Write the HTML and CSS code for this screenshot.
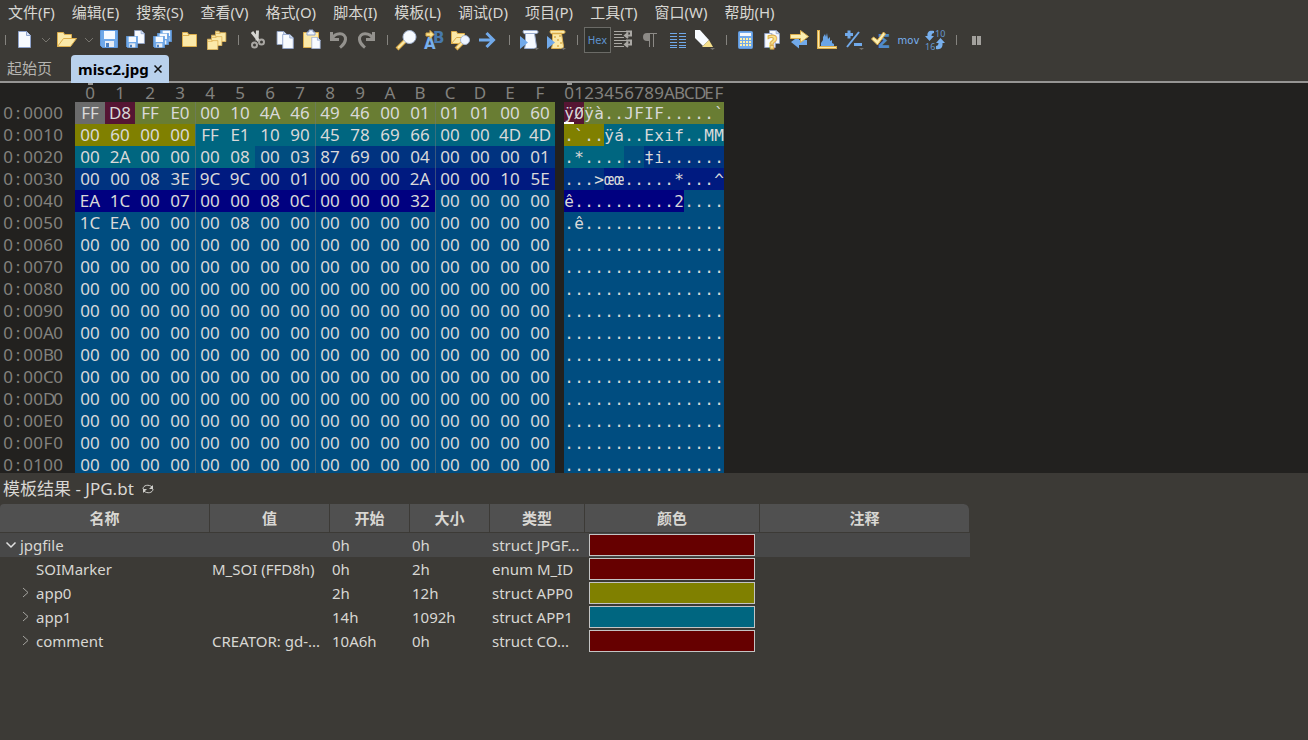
FILE: index.html
```html
<!DOCTYPE html>
<html lang="zh-CN">
<head>
<meta charset="utf-8">
<title>misc2.jpg</title>
<link rel="stylesheet" href="styles.css">
</head>
<body>
<svg class="defs" aria-hidden="true">
  <symbol id="page" viewBox="0 0 13 17"><path d="M.5.5h8l4 4v12H.5z" fill="#f8fbff" stroke="#8fa3cc"/><path d="M8.500.5v4h4" fill="#d5e2f5" stroke="#8fa3cc"/></symbol>
  <symbol id="floppy" viewBox="0 0 18 18"><path d="M.5.5h17v17H2.500l-2-2z" fill="#6fa8e8" stroke="#5f98dc"/><path d="M4 1h11v8H4z" fill="#f6faff"/><path d="M5 11h9v6H5z" fill="#e8edf3"/><path d="M6 13h3v4H6z" fill="#4a7fc0"/></symbol>
  <symbol id="folder" viewBox="0 0 16 16"><path d="M.5 15.500V1.500h5l1 2h8v12z" fill="#fbe9a9" stroke="#dcae4c"/><path d="M1 4.500h6l1-1" fill="none" stroke="#dcae4c"/></symbol>
</svg>

<nav class="menubar" aria-label="菜单">
  <button>文件(F)</button><button>编辑(E)</button><button>搜索(S)</button><button>查看(V)</button><button>格式(O)</button><button>脚本(I)</button><button>模板(L)</button><button>调试(D)</button><button>项目(P)</button><button>工具(T)</button><button>窗口(W)</button><button>帮助(H)</button>
</nav>

<div class="toolbar" role="toolbar">
  <span class="sep first"></span>
  <button aria-label="新建"><svg viewBox="0 0 21 22"><use href="#page" x="5" y="2" width="13" height="17"/></svg></button>
  <button class="drop" aria-label="新建选项"><svg viewBox="0 0 10 6"><path d="M1 1l4 4 4-4" fill="none" stroke="#77756f"/></svg></button>
  <button aria-label="打开"><svg viewBox="0 0 21 22"><path d="M1.500 17.500v-14h6l1 2h7v4" fill="#fbe9a9" stroke="#dcae4c"/><path d="M1.500 17.500l6-8H20.500l-6 8z" fill="#fbe9a9" stroke="#dcae4c"/></svg></button>
  <button class="drop" aria-label="打开选项"><svg viewBox="0 0 10 6"><path d="M1 1l4 4 4-4" fill="none" stroke="#77756f"/></svg></button>
  <button aria-label="保存"><svg viewBox="0 0 21 22"><use href="#floppy" x="1" y="1" width="18" height="18"/></svg></button>
  <button aria-label="另存为"><svg viewBox="0 0 21 22"><use href="#page" x="8" y="1" width="11" height="14"/><use href="#floppy" x="0" y="7" width="12" height="12"/></svg></button>
  <button aria-label="全部保存"><svg viewBox="0 0 21 22"><use href="#floppy" x="7" y="1" width="12" height="12"/><use href="#floppy" x="4" y="4" width="12" height="12"/><use href="#floppy" x="0" y="7" width="12" height="12"/></svg></button>
  <button aria-label="关闭"><svg viewBox="0 0 21 22"><use href="#folder" x="2" y="2" width="16" height="16"/></svg></button>
  <button aria-label="全部关闭"><svg viewBox="0 0 21 22"><use href="#folder" x="8" y="1" width="12" height="12"/><use href="#folder" x="4" y="5" width="12" height="12"/><use href="#folder" x="0" y="9" width="12" height="12"/></svg></button>
  <span class="sep"></span>
  <button aria-label="剪切"><svg viewBox="0 0 21 22"><g fill="none"><path d="M4 3l7 9M9.500 1.500l-.5 10" stroke-width="3" stroke="#d5d4d0"/><circle cx="6.500" cy="16" r="2.500" stroke-width="2" stroke="#a9a7a3"/><circle cx="13.500" cy="13" r="2.500" stroke-width="2" stroke="#a9a7a3"/></g></svg></button>
  <button aria-label="复制"><svg viewBox="0 0 21 22"><use href="#page" x="1" y="2" width="12" height="14"/><use href="#page" x="7" y="5" width="12" height="15"/></svg></button>
  <button aria-label="粘贴"><svg viewBox="0 0 21 22"><path d="M1.500 3.500h15v15h-15z" fill="#fbe9a9" stroke="#dcae4c"/><path d="M5 3h2V1h4v2h2v3H5z" fill="#eef4fc" stroke="#8fa3cc"/><use href="#page" x="9" y="8" width="10" height="12"/></svg></button>
  <button aria-label="撤销"><svg viewBox="0 0 21 22"><g fill="none" stroke="#94928e" stroke-width="3"><path d="M2.500 3v7.500H10"/><path d="M3 10C6 3 17 3 16.500 10.500 16 15 14 16 11 18.500"/></g></svg></button>
  <button aria-label="重做"><svg viewBox="0 0 21 22"><g fill="none" stroke="#94928e" stroke-width="3"><path d="M17.500 3v7.500H10"/><path d="M17 10C14 3 3 3 3.500 10.500 4 15 6 16 9 18.500"/></g></svg></button>
  <span class="sep"></span>
  <button aria-label="查找"><svg viewBox="0 0 21 22"><path d="M0 20l8-8" stroke="#dcae4c" stroke-width="4"/><path d="M1 19l7-7" stroke="#fbe9a9" stroke-width="2"/><circle cx="12.500" cy="8" r="6.500" fill="#f6faff" stroke="#a7b8d5"/></svg></button>
  <button aria-label="替换"><svg viewBox="0 0 21 22"><text x="9" y="14" class="glyph" font-size="15" fill="#4779ad">B</text><text x="0" y="20" class="glyph" font-size="15" fill="#78b0ee">A</text><path d="M2 4h4V1.500l4 4-4 4V7H2z" fill="#fbe390" stroke="#dcae4c"/></svg></button>
  <button aria-label="在文件中查找"><svg viewBox="0 0 21 22"><path d="M.5 14.500v-12h5l1 2h7v4" fill="#fbe9a9" stroke="#dcae4c"/><path d="M.5 14.500l5-6h12l-4 6z" fill="#fbe9a9" stroke="#dcae4c"/><path d="M5 20l7-7" stroke="#dcae4c" stroke-width="4"/><path d="M6 19l6-6" stroke="#fbe9a9" stroke-width="2"/><circle cx="14" cy="11" r="4.500" fill="#eef5ff" stroke="#a7b8d5"/></svg></button>
  <button aria-label="转到"><svg viewBox="0 0 21 22"><path d="M1 11h13M8.500 4l7 7-7 7" fill="none" stroke="#71a9ea" stroke-width="3"/></svg></button>
  <span class="sep"></span>
  <button aria-label="运行脚本"><svg viewBox="0 0 21 22"><path d="M4.500 1.500h13c2 0 2 3 0 3h-2l2 13c0 2-2 2-4 2h-8l1-4V5c-2 0-3-2-2-3.500z" fill="#f5f9ff" stroke="#9aacce"/><path d="M6 4.500h10" stroke="#9aacce"/><path d="M1 7l8 6.500L1 20z" fill="#71a9ea"/><path d="M15 19h5l-2.500 2z" fill="#75736f"/></svg></button>
  <button aria-label="运行模板"><svg viewBox="0 0 21 22"><path d="M4.500 1.500h13c2 0 2 3 0 3h-2l2 13c0 2-2 2-4 2h-8l1-4V5c-2 0-3-2-2-3.500z" fill="#fbe9a9" stroke="#dcae4c"/><path d="M6 4.500h10M8 8h2m3-1h2m-4 4h2m1 3h2m-5 3h2" stroke="#dcae4c" stroke-width="1.500"/><path d="M1 7l8 6.500L1 20z" fill="#71a9ea"/><path d="M15 19h5l-2.500 2z" fill="#75736f"/></svg></button>
  <span class="sep"></span>
  <button class="hex-btn" aria-pressed="true">Hex</button>
  <button aria-label="自动换行"><svg viewBox="0 0 21 22"><g fill="none" stroke="#aaa8a4"><path d="M0 2.500h16M0 5.500h8M0 8.500h10M0 11.500h16M0 14.500h8M0 17.500h10"/><path d="M12 2.500h5v4h-6M14 4l-3 2.500 3 2.500M12 11.500h5v4h-6M14 13l-3 2.500 3 2.500" stroke-width="2"/></g></svg></button>
  <button aria-label="显示空白"><svg viewBox="0 0 21 22"><path d="M9 4H6a4 4 0 0 0 0 8h3z" fill="#8c8a86"/><path d="M8.500 4v14M12.500 4v14M7 4.500h9" fill="none" stroke="#8c8a86"/></svg></button>
  <button aria-label="列模式"><svg viewBox="0 0 21 22"><path d="M2 4.500h7m2 0h7M2 7.500h7m2 0h7M2 10.500h7m2 0h7M2 13.500h7m2 0h7M2 16.500h7m2 0h7M2 18.500h7m2 0h7" stroke="#71a9ea"/></svg></button>
  <button aria-label="高亮"><svg viewBox="0 0 21 22"><path d="M0 1h5l9 10-6 6-8-8z" fill="#f8fbff"/><path d="M14 11l4 7H7z" fill="#f5df8c"/><path d="M15 19h5l-2.500 2z" fill="#75736f"/></svg></button>
  <span class="sep"></span>
  <button aria-label="计算器"><svg viewBox="0 0 21 22"><rect x="2.500" y="2.500" width="14" height="17" rx="1" fill="#71a9ea" stroke="#5f98dc"/><path d="M4 4h11v3H4z" fill="#f4f9ff"/><path d="M4 10h11M4 13h11M4 16h11" stroke="#fff0a8" stroke-width="2" stroke-dasharray="2 1"/></svg></button>
  <button aria-label="比较"><svg viewBox="0 0 21 22"><use href="#page" x="6" y="1" width="11" height="14"/><use href="#page" x="1" y="4" width="12" height="15"/><text x="4" y="20" class="glyph" font-size="19" fill="#fbe390" stroke="#dcae4c">?</text></svg></button>
  <button aria-label="转换"><svg viewBox="0 0 21 22"><path d="M17 11v5H9v3.500l-8-6.500 8-6v4z" fill="#71a9ea"/><path d="M.5 5.500h10v-4l8 6-8 6v-4H.5z" fill="#fbeeb0" stroke="#dcae4c"/></svg></button>
  <button aria-label="直方图"><svg viewBox="0 0 21 22"><path d="M4 17v-3l2-3V8l2-3 1 3 1-4 1 6 2-2v4l2-1v3l2 1v2z" fill="#6aa5e6"/><path d="M1.500 1v17.500H20" fill="none" stroke="#dcae4c" stroke-width="3"/><path d="M1.500 2v16.500H19" fill="none" stroke="#fbe9a9"/></svg></button>
  <button aria-label="校正"><svg viewBox="0 0 21 22"><path d="M1 5.500h8M5 1.500v8M10 15.500h8" stroke="#71a9ea" stroke-width="3"/><path d="M15 3L3 18" stroke="#71a9ea" stroke-width="2"/><path d="M15 19h5l-2.500 2z" fill="#75736f"/></svg></button>
  <button aria-label="校验和"><svg viewBox="0 0 21 22"><text x="6" y="19" class="glyph" font-size="20" fill="#4f89c9">Σ</text><path d="M.5 10l2-2 4 3 6-8 2 2-8 11z" fill="#fbeeb0" stroke="#dcae4c"/></svg></button>
  <button class="mov-btn">mov</button>
  <button aria-label="进制转换"><svg viewBox="0 0 21 22"><text x="10" y="8" class="digits">10</text><text x="0" y="21" class="digits">16</text><path d="M9 2C4 1 2 3 2.500 7H0l4.500 5L9 7H6.500c0-2 1-3 2.500-3zM11 20c5 1 7-2 6.500-6H20l-4.500-5L11 14h2.500c0 2-1 3-2.500 3z" fill="#78b0ee"/></svg></button>
  <span class="sep"></span>
  <button aria-label="暂停"><svg viewBox="0 0 21 22"><path d="M6 7h4v9H6zm5 0h4v9h-4z" fill="#a3a19d"/></svg></button>
</div>

<div class="tabs" role="tablist">
  <button class="tab" role="tab">起始页</button>
  <div class="tab active" role="tab" aria-selected="true">misc2.jpg<button aria-label="关闭标签"><svg viewBox="0 0 8 8"><path d="M.5.5l7 7M7.500.5l-7 7" stroke="#111" stroke-width="1.500"/></svg></button></div>
</div>

<main class="editor">
  <table class="hex">
    <thead><tr id="ruler"></tr></thead>
    <tbody id="bytes"></tbody>
  </table>
</main>

<section class="results">
  <h2>模板结果 - JPG.bt<button aria-label="刷新"><svg viewBox="0 0 12 10"><path d="M1 5c0-4 6-5 9-2M11 5c0 4-6 5-9 2" fill="none" stroke="#d0cfcb"/><path d="M11 1v4H7zM1 9V5h4z" fill="#d0cfcb"/></svg></button></h2>
  <table class="tree">
    <colgroup><col class="w-name"><col class="w-value"><col class="w-num"><col class="w-num"><col class="w-type"><col class="w-color"><col class="w-note"></colgroup>
    <thead><tr><th>名称</th><th>值</th><th>开始</th><th>大小</th><th>类型</th><th>颜色</th><th>注释</th></tr></thead>
    <tbody>
      <tr class="current"><td><div class="node"><svg class="arrow" viewBox="0 0 12 12"><path d="M1.500 3.500L6 8l4.500-4.500" fill="none" stroke="#e0e0e0" stroke-width="1.500"/></svg>jpgfile</div></td><td></td><td>0h</td><td>0h</td><td>struct JPGF...</td><td><div class="swatch red"></div></td><td></td></tr>
      <tr><td><div class="node child"><span class="arrow"></span>SOIMarker</div></td><td>M_SOI (FFD8h)</td><td>0h</td><td>2h</td><td>enum M_ID</td><td><div class="swatch red"></div></td><td></td></tr>
      <tr><td><div class="node child"><svg class="arrow" viewBox="0 0 12 12"><path d="M3 1l5 4.500L3 10" fill="none" stroke="#a5a4a0"/></svg>app0</div></td><td></td><td>2h</td><td>12h</td><td>struct APP0</td><td><div class="swatch olive"></div></td><td></td></tr>
      <tr><td><div class="node child"><svg class="arrow" viewBox="0 0 12 12"><path d="M3 1l5 4.500L3 10" fill="none" stroke="#a5a4a0"/></svg>app1</div></td><td></td><td>14h</td><td>1092h</td><td>struct APP1</td><td><div class="swatch teal"></div></td><td></td></tr>
      <tr><td><div class="node child"><svg class="arrow" viewBox="0 0 12 12"><path d="M3 1l5 4.500L3 10" fill="none" stroke="#a5a4a0"/></svg>comment</div></td><td>CREATOR: gd-...</td><td>10A6h</td><td>0h</td><td>struct CO...</td><td><div class="swatch red"></div></td><td></td></tr>
    </tbody>
  </table>
</section>
<script src="hex.js"></script>
</body>
</html>
```

FILE: styles.css
```css
* { box-sizing: border-box; }

body {
  margin: 0;
  height: 100vh;
  display: flex;
  flex-direction: column;
  overflow: hidden;
  background: #3c3a36;
  color: #d8d7d3;
  font: 15px/20px "Noto Sans", "Noto Sans CJK SC", sans-serif;
}

button {
  margin: 0;
  padding: 0;
  border: 0;
  background: none;
  color: inherit;
  font: inherit;
}

.defs { position: absolute; width: 0; height: 0; }

.menubar {
  display: flex;
  flex: none;
  gap: 17px;
  height: 26px;
  padding: 0 0 2px 8px;
  white-space: nowrap;
}

.toolbar { display: flex; flex: none; align-items: center; height: 28px; }
.toolbar button {
  flex: none;
  display: flex;
  align-items: center;
  justify-content: center;
  width: 27px;
  height: 26px;
}
.toolbar svg { width: 21px; height: 22px; overflow: visible; }
.toolbar .drop { width: 16px; padding-left: 2px; }
.toolbar .drop svg { flex: none; width: 10px; height: 6px; }
.sep { flex: none; width: 14px; height: 10px; background: linear-gradient(#85837f, #85837f) center / 1px 100% no-repeat; }
.sep.first { width: 10px; }
.glyph { font-family: "DejaVu Sans", sans-serif; font-weight: 700; }
.digits { font-family: "Noto Sans", sans-serif; font-size: 9px; fill: #6497cf; }
.toolbar .hex-btn {
  border: 1px solid #6b6b67;
  background: #30312d;
  color: #5e93cd;
  font: 10px "DejaVu Sans", sans-serif;
}
.toolbar .mov-btn { color: #78b0ee; font: 10px "DejaVu Sans", sans-serif; }

.tabs {
  display: flex;
  flex: none;
  align-items: stretch;
  height: 29px;
  padding-top: 1px;
  border-bottom: 2px solid #969593;
  color: #b5b4b0;
}
.tab { padding: 0 7px; }
.tabs > button.tab { width: 71px; text-align: left; }
.tab.active {
  display: flex;
  align-items: center;
  gap: 5px;
  height: 28px;
  border-radius: 4px 4px 0 0;
  background: #b9d1ec;
  color: #000;
  font-weight: 700;
}
.tab.active button { display: flex; }
.tab.active svg { width: 8px; height: 8px; }

.editor { flex: 1; min-height: 0; overflow: hidden; background: #22211f; }
.hex { border-collapse: collapse; font-size: 17px; line-height: 22px; color: #d9d9d9; }
.hex th { padding: 0; color: #82817e; font-weight: 400; }
.hex thead th { height: 19px; line-height: 19px; }
.hex td { padding: 0; }
.hex .addr { width: 75px; padding-left: 3px; }
.hex .byte { width: 30px; text-align: center; }
.hex tbody .byte.group { background-image: linear-gradient(#6f7a7a80, #6f7a7a80); background-size: 1px 100%; background-repeat: no-repeat; }
.hex .text { padding-left: 9px; }
.cells { display: flex; }
.cells > span { width: 10px; height: 22px; text-align: center; }
thead .cells > span { height: 19px; }
td .cells { font: 16px/23px "DejaVu Sans Mono", monospace; }
.mark { background: linear-gradient(#969593, #969593) top / 5px 2px no-repeat; }

.c-cursor { background-color: #6b6b6b; }
.c-soi { background-color: #551533; }
.c-line { background-color: #697d33; }
.c-app0 { background-color: #808000; }
.c-app1 { background-color: #006680; }
.c-steel { background-color: #004d80; }
.c-blue { background-color: #003380; }
.c-deep { background-color: #001a80; }
.c-navy { background-color: #000080; }
.caret { border-bottom: 2px solid #fff; }

.results { flex: none; height: 267px; }
.results h2 {
  display: flex;
  align-items: center;
  gap: 8px;
  margin: 0;
  padding: 1px 3px 0;
  height: 31px;
  font-size: 17px;
  line-height: 30px;
  font-weight: 400;
}
.results h2 button { display: flex; }
.results h2 svg { width: 12px; height: 10px; }

.tree { width: 970px; max-width: 100%; table-layout: fixed; border-collapse: separate; border-spacing: 0; }
.w-name { width: 210px; }
.w-value { width: 120px; }
.w-num { width: 80px; }
.w-type { width: 95px; }
.w-color { width: 175px; }
.w-note { width: 210px; }
.tree th {
  height: 29px;
  padding: 0;
  border-right: 1px solid #3c3a36;
  border-bottom: 1px solid #3c3a36;
  background: #505050;
  font-weight: 700;
}
.tree th:first-child { border-top-left-radius: 4px; }
.tree th:last-child { border-top-right-radius: 6px; }
.tree td { height: 24px; padding: 0 0 0 2px; overflow: hidden; text-overflow: ellipsis; white-space: nowrap; }
.tree .current td { background: #484848; }
.node { display: flex; align-items: center; gap: 3px; padding-left: 3px; }
.node.child { padding-left: 18px; gap: 4px; }
.arrow { flex: none; width: 12px; height: 12px; }
.swatch { height: 22px; margin: 0 5px 0 2px; border: 1px solid #c4c4c4; }
.red { background: #660000; }
.olive { background: #808000; }
.teal { background: #006680; }
```

FILE: hex.js
```js
const ZERO = "00 ".repeat(16).trim();
const DOTS = ".".repeat(16);
const rows = [
  ["FF D8 FF E0 00 10 4A 46 49 46 00 01 01 01 00 60", "ÿØÿà..JFIF.....`"],
  ["00 60 00 00 FF E1 10 90 45 78 69 66 00 00 4D 4D", ".`..ÿá..Exif..MM"],
  ["00 2A 00 00 00 08 00 03 87 69 00 04 00 00 00 01", ".*......‡i......"],
  ["00 00 08 3E 9C 9C 00 01 00 00 00 2A 00 00 10 5E", "...>œœ.....*...^"],
  ["EA 1C 00 07 00 00 08 0C 00 00 00 32 00 00 00 00", "ê..........2...."],
  ["1C EA 00 00 00 08 00 00 00 00 00 00 00 00 00 00", ".ê.............."]
];
while (rows.length < 17) rows.push([ZERO, DOTS]);

// Each entry is the first offset that a colour no longer covers.
const ranges = [
  [2, "soi"], [16, "line"], [20, "app0"], [38, "app1"], [40, "steel"],
  [52, "blue"], [64, "deep"], [76, "navy"], [Infinity, "steel"]
];
const colour = (offset) => "c-" + ranges.find((r) => offset < r[0])[1];

function el(tag, cls, text) {
  const node = document.createElement(tag);
  if (cls) node.className = cls;
  if (text !== undefined) node.textContent = text;
  return node;
}
function cells(text, clsOf) {
  const box = el("div", "cells");
  [...text].forEach((ch, i) => box.append(el("span", clsOf ? clsOf(i) : "", ch)));
  return box;
}

const digits = "0123456789ABCDEF";
const ruler = document.getElementById("ruler");
ruler.append(el("th", "addr"));
[...digits].forEach((d, i) => ruler.append(el("th", i ? "byte" : "byte mark", d)));
const rulerText = el("th", "text");
rulerText.append(cells(digits, (i) => (i ? "" : "mark")));
ruler.append(rulerText);

const body = document.getElementById("bytes");
rows.forEach(([hex, text], r) => {
  const tr = el("tr");
  const addr = el("th", "addr");
  addr.append(cells("0:" + (r * 16).toString(16).toUpperCase().padStart(4, "0")));
  tr.append(addr);
  hex.split(" ").forEach((b, i) => {
    const at = r * 16 + i;
    const group = i && i % 4 === 0 ? " group" : "";
    tr.append(el("td", "byte " + (at ? colour(at) : "c-cursor") + group, b));
  });
  const td = el("td", "text");
  td.append(cells(text, (i) => colour(r * 16 + i) + (r + i ? "" : " caret")));
  tr.append(td);
  body.append(tr);
});
```
